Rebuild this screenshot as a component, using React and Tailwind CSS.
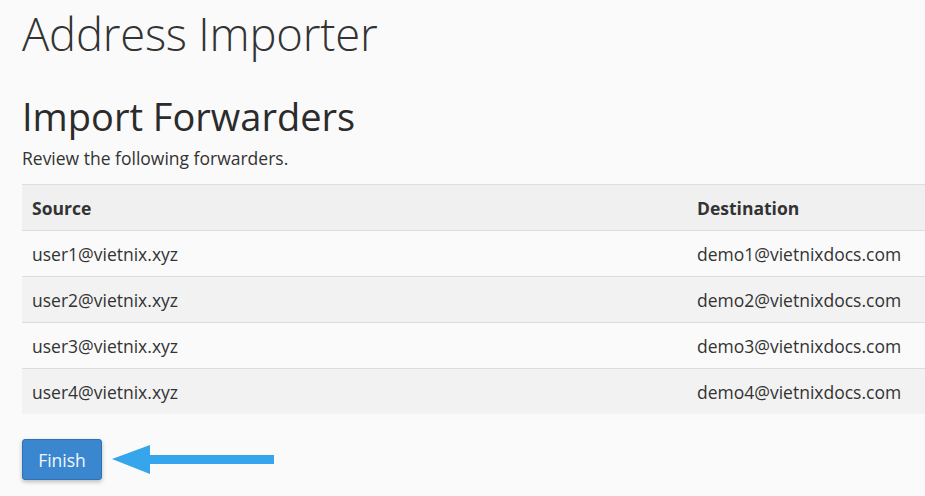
export default function App() {
  const rows = [
    ["user1@vietnix.xyz", "demo1@vietnixdocs.com"],
    ["user2@vietnix.xyz", "demo2@vietnixdocs.com"],
    ["user3@vietnix.xyz", "demo3@vietnixdocs.com"],
    ["user4@vietnix.xyz", "demo4@vietnixdocs.com"],
  ];
  return (
    <div
      className="w-[925px] h-[496px] overflow-hidden bg-[#fafafa] text-[#333] pl-[22px]"
      style={{ fontFamily: '"Open Sans", sans-serif' }}
    >
      <h1 className="text-[45.4px] font-light leading-none pt-[11px] tracking-[-0.2px]">Address Importer</h1>
      <h2 className="text-[38px] font-normal leading-none mt-[41px] text-[#2b2b2b]">Import Forwarders</h2>
      <p className="text-[17.5px] leading-[22px] mt-[12px]">Review the following forwarders.</p>
      <div className="mt-[15px] w-[910px]">
        <div className="flex h-[46px] items-center bg-[#f0f0f0] border-t border-[#ddd] font-bold text-[17.5px]">
          <div className="w-[665px] pl-[10px]">Source</div>
          <div className="pl-[10px]">Destination</div>
        </div>
        {rows.map((r, i) => (
          <div
            key={i}
            className={
              "flex h-[46px] items-center border-t border-[#ddd] text-[17.5px] " +
              (i % 2 === 1 ? "bg-[#f2f2f2]" : "bg-[#fafafa]")
            }
          >
            <div className="w-[665px] pl-[10px]">{r[0]}</div>
            <div className="pl-[10px]">{r[1]}</div>
          </div>
        ))}
      </div>
      <div className="flex items-center mt-[25px] gap-[10px]">
        <button className="w-[80px] h-[41px] bg-[#3b87cf] border border-[#2f72b3] rounded-[3px] text-[#f2f7fc] text-[17.5px] shadow-[0_2px_4px_rgba(0,0,0,0.25)]">
          Finish
        </button>
        <svg width="164" height="32" viewBox="0 0 164 32" className="ml-0">
          <polygon points="0,15 38,1 38,11 162,11 162,20 38,20 38,30" fill="#35a5ec" />
        </svg>
      </div>
    </div>
  );
}
